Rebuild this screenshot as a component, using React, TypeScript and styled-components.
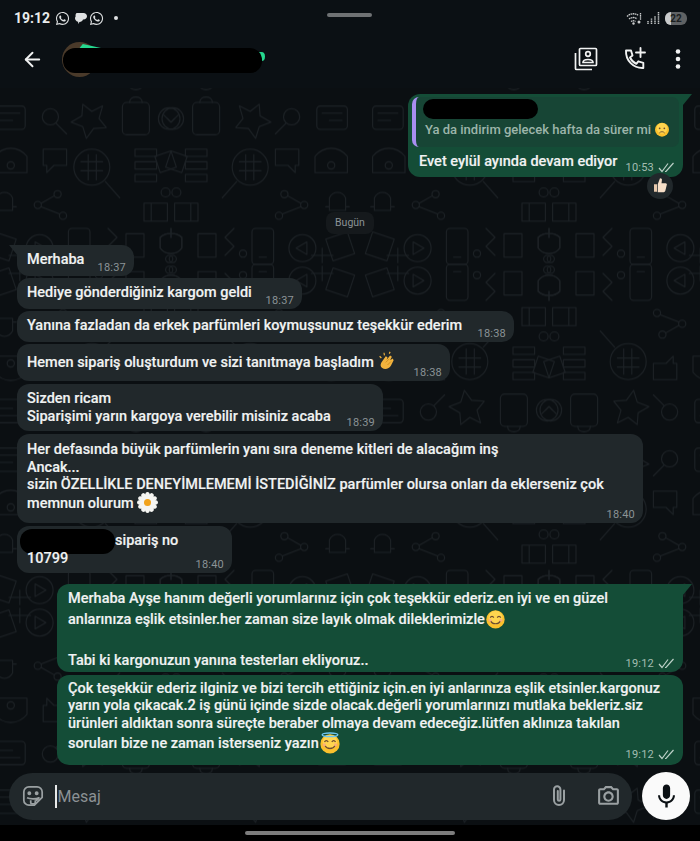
import React from "react";
import styled, { createGlobalStyle } from "styled-components";
import { ArrowLeft } from "lucide-react";
import { FaWhatsapp } from "react-icons/fa";
import { MdMic, MdOutlinePhotoCamera } from "react-icons/md";

const GlobalStyle = createGlobalStyle`
  html, body { margin: 0; padding: 0; background: #000; }
  body { font-family: Roboto, "Liberation Sans", sans-serif; }
`;

type EmojiKind = "sad" | "thumb" | "clap" | "daisy" | "smile" | "halo";

const Emoji: React.FC<{ kind: EmojiKind; size?: number }> = ({ kind, size = 20 }) => (
  <EmojiSvg width={size} height={size} viewBox="0 0 24 24">
    {(kind === "sad" || kind === "smile" || kind === "halo") && (
      <>
        <circle cx="12" cy="13" r="10.5" fill="#fbc02d" />
        <circle cx="12" cy="11" r="8" fill="#ffd54f" />
      </>
    )}
    {kind === "sad" && (
      <>
        <circle cx="8.5" cy="11" r="1.3" fill="#6d4c2f" />
        <circle cx="15.5" cy="11" r="1.3" fill="#6d4c2f" />
        <path d="M8 18c2-2.6 6-2.6 8 0" stroke="#6d4c2f" strokeWidth="1.3" fill="none" />
      </>
    )}
    {(kind === "smile" || kind === "halo") && (
      <>
        <path d="M6 11c1-2 3-2 4 0M14 11c1-2 3-2 4 0" stroke="#6d4c2f" strokeWidth="1.4" fill="none" />
        <path d="M6.5 15c2 4 9 4 11 0" stroke="#6d4c2f" strokeWidth="1.4" fill="none" />
        <circle cx="5.8" cy="14" r="1.8" fill="#f9a08b" opacity="0.7" />
        <circle cx="18.2" cy="14" r="1.8" fill="#f9a08b" opacity="0.7" />
      </>
    )}
    {kind === "halo" && <ellipse cx="12" cy="3" rx="8.5" ry="2" fill="none" stroke="#6ec6f0" strokeWidth="1.6" />}
    {kind === "thumb" && (
      <>
        <path d="M4 11h4v10H4z" fill="#e8c9ad" />
        <path d="M9 11l3-8c2 0 3 1 2.5 3L14 9.500h5.500c1.500 0 2 1.500 1.500 2.500l-2 8c-.3 1-1 1.500-2 1.500H9z" fill="#f7dfc8" />
      </>
    )}
    {kind === "clap" && (
      <>
        <path d="M5 13l5-7 2 1-1 3 4-5 2 1.500-2 4 3-2 1 2-3 6c-2 4-7 5-10 3-2-1.500-2.500-4-1-6.500z" fill="#f2b33d" />
        <path d="M3 6l2 2M8 2l.5 3M15 1l-1 2" stroke="#f2b33d" strokeWidth="1.3" fill="none" />
        <path d="M10 13l4-4M12 16l4-4" stroke="#c98a1e" strokeWidth="1" fill="none" />
      </>
    )}
    {kind === "daisy" && (
      <>
        {[0, 30, 60, 90, 120, 150, 180, 210, 240, 270, 300, 330].map((a) => (
          <ellipse key={a} cx="12" cy="4.500" rx="2.800" ry="4.500" fill="#f5f5f2" transform={`rotate(${a} 12 12)`} />
        ))}
        <circle cx="12" cy="12" r="4" fill="#f2a31c" />
      </>
    )}
  </EmojiSvg>
);

const DoubleCheck: React.FC = () => (
  <CheckSvg width="17" height="11" viewBox="0 0 17 11">
    <path d="M1 6l3 3.500L10 1.500M7 9.500L8 9.500 15.500 1" stroke="currentColor" strokeWidth="1.200" fill="none" />
  </CheckSvg>
);

const Wallpaper: React.FC = () => (
  <WallpaperSvg width="700" height="737">
    <defs>
      <g id="doodle-tile" fill="none" stroke="#1c2125" strokeWidth="1.200" strokeLinecap="round" strokeLinejoin="round">
        <rect x="14" y="14" width="34" height="26" rx="4" />
        <path d="M20 22h22M20 30h14" />
        <circle cx="76" cy="26" r="9" />
        <path d="M82 33l12 12" />
        <path d="M112 12l10 8 12-6-4 14 8 10-14 1-8 11-4-13-13-5 12-7z" />
        <rect x="156" y="10" width="30" height="36" rx="5" />
        <path d="M164 10c0-8 14-8 14 0" />
        <circle cx="212" cy="28" r="12" />
        <path d="M206 28l4 4 8-8" />
        <path d="M14 70c10-12 26-12 36 0v18H14z" />
        <circle cx="32" cy="80" r="4" />
        <path d="M68 62h26v18H80l-8 8v-8h-4z" />
        <circle cx="122" cy="82" r="20" />
        <path d="M110 76h24M110 86h24M118 68v28M127 68v28" />
        <path d="M137 98l16 18" />
        <path d="M170 62h24v8h-24zM170 76h24v8h-24zM170 90h24v8h-24z" />
        <path d="M210 64l18 6-6 18-18-6z" />
        <circle cx="216" cy="110" r="5" />
        <path d="M16 116c4-8 14-8 18 0v14H16zM12 126h4M34 126h4" />
        <circle cx="62" cy="124" r="4" />
        <circle cx="84" cy="112" r="4" />
        <circle cx="90" cy="136" r="4" />
        <path d="M66 122l14-8M66 126l20 8" />
        <path d="M180 122h26v20h-26zM188 122v20" />
        <path d="M14 154l24 8-8 24-24-8z" />
        <circle cx="64" cy="172" r="15" />
        <path d="M59 165l12 7-12 7z" />
        <rect x="96" y="150" width="24" height="40" rx="4" />
        <path d="M104 182h8" />
        <path d="M140 150l10 10-10 10 10 10M160 156h20v26h-20z" />
        <path d="M198 160c6-6 18-6 24 0v12c-6 8-18 8-24 0zM210 150v10" />
        <circle cx="208" cy="196" r="4" />
        <circle cx="130" cy="202" r="4" />
        <path d="M30 200h24M42 192v16" />
      </g>
      <pattern id="doodle" width="420" height="380" patternUnits="userSpaceOnUse" patternTransform="scale(0.9) translate(-20 6)">
        <use href="#doodle-tile" />
        <use href="#doodle-tile" transform="translate(420 0) scale(-1 1)" />
        <use href="#doodle-tile" transform="translate(0 380) scale(1 -1)" />
        <use href="#doodle-tile" transform="rotate(180 210 190)" />
      </pattern>
    </defs>
    <rect width="700" height="737" fill="url(#doodle)" />
  </WallpaperSvg>
);

export default function App() {
  return (
    <>
      <GlobalStyle />
      <Phone>
        <Header>
          <StatusBar>
            <Clock>19:12</Clock>
            <NotifIcons>
              <FaWhatsapp size={15} />
              <svg width="15" height="15" viewBox="0 0 15 15" fill="#dfe1e2">
                <path d="M5 2h6.500C13.500 2 15 3.300 15 5.200S13.500 8.500 11.500 8.500H11c-.4 1.500-1.800 2.500-3.500 2.500l-1.500 2 .2-2.200C4.500 10.500 3 9 3 7.200c0-.8.3-1.500.7-2C3.200 4 3.800 2 5 2z" />
              </svg>
              <FaWhatsapp size={15} />
              <NotifDot />
            </NotifIcons>
            <CameraPill />
            <StatusRight>
              <svg width="17" height="13" viewBox="0 0 17 13">
                <g fill="none" stroke="#c9cbcc" strokeWidth="1.300" strokeDasharray="1.600 0.500">
                  <path d="M1 4.500C4.500 1 9.500 1 12.500 3.500M3 7c2.500-2 6-2 8 0M5 9.500c1.500-1 3-1 4.500 0" />
                  <path d="M14.500 1v7" />
                </g>
                <circle cx="7.500" cy="11.500" r="1.200" fill="#c9cbcc" />
                <circle cx="13" cy="10" r="1.500" fill="#c9cbcc" />
              </svg>
              <svg width="13" height="12" viewBox="0 0 13 12">
                <g stroke="#bfc1c2" strokeWidth="1.500" strokeDasharray="1.500 0.600">
                  <path d="M1 12V9M4.500 12V6.500M8 12V4M11.500 12V0" />
                </g>
              </svg>
              <Battery>
                <BatteryLevel />
                <BatteryText>22</BatteryText>
              </Battery>
            </StatusRight>
          </StatusBar>
          <TitleRow>
            <BackButton>
              <ArrowLeft size={23} strokeWidth={2} color="#f1f2f2" />
            </BackButton>
            <Contact>
              <Avatar />
              <GreenName />
              <GreenEnd />
              <HeaderBlob />
            </Contact>
            <Actions>
              <HeaderIcon $mr={25}>
                <svg width="24" height="24" viewBox="0 0 24 24" fill="none" stroke="#f1f2f2" strokeWidth="1.700">
                  <rect x="5.500" y="1.500" width="17" height="17" rx="1" />
                  <path d="M1.500 6v15.500a1 1 0 0 0 1 1H18" />
                  <circle cx="14" cy="7" r="2.300" />
                  <path d="M9 15.500c0-2 2-3 5-3s5 1 5 3z" />
                </svg>
              </HeaderIcon>
              <HeaderIcon $mr={19}>
                <svg width="24" height="24" viewBox="0 0 24 24" fill="none" stroke="#f1f2f2" strokeWidth="1.900" strokeLinejoin="round">
                  <path d="M3 3.500h5l1.500 5-2.500 2c1.200 2.700 3.500 5 6.300 6.300l2-2.500 5 1.500v5.200c-10 .5-17.800-7.500-17.300-17.500z" />
                  <path d="M17.500 1v9M13 5.500h9" strokeLinecap="round" />
                </svg>
              </HeaderIcon>
              <HeaderIcon $mr={10}>
                <svg width="24" height="24" viewBox="0 0 24 24" fill="#f1f2f2">
                  <circle cx="12" cy="4.500" r="2.300" />
                  <circle cx="12" cy="12" r="2.300" />
                  <circle cx="12" cy="19.500" r="2.300" />
                </svg>
              </HeaderIcon>
            </Actions>
          </TitleRow>
        </Header>

        <Chat>
          <Wallpaper />
          <Messages>
            <Bubble $out $w={275} $tail $mt={6} $h={83} $block>
              <Quote>
                <QuoteBlob />
                <QuoteText>
                  Ya da indirim gelecek hafta da sürer mi <Emoji kind="sad" size={16} />
                </QuoteText>
              </Quote>
              <Row $mt={6}>
                <Text $pl={1}>Evet eylül ayında devam ediyor</Text>
                <Meta $out>
                  10:53 <DoubleCheck />
                </Meta>
              </Row>
            </Bubble>
            <Reaction>
              <Emoji kind="thumb" size={18} />
            </Reaction>
            <DayRow>
              <DayPill>Bugün</DayPill>
            </DayRow>

            <Bubble $w={117} $tail $mt={11}>
              <Row>
                <Text>Merhaba</Text>
                <Meta>18:37</Meta>
              </Row>
            </Bubble>
            <Bubble $w={285} $mt={2}>
              <Row>
                <Text>Hediye gönderdiğiniz kargom geldi</Text>
                <Meta>18:37</Meta>
              </Row>
            </Bubble>
            <Bubble $w={497} $mt={2}>
              <Row>
                <Text>Yanına fazladan da erkek parfümleri koymuşsunuz teşekkür ederim</Text>
                <Meta>18:38</Meta>
              </Row>
            </Bubble>
            <Bubble $w={433} $mt={2} $h={37}>
              <Row>
                <Text $lh={26}>
                  Hemen sipariş oluşturdum ve sizi tanıtmaya başladım <Emoji kind="clap" size={21} />
                </Text>
                <Meta>18:38</Meta>
              </Row>
            </Bubble>
            <Bubble $w={366} $mt={3} $h={47}>
              <Row>
                <Text>
                  Sizden ricam
                  <br />
                  Siparişimi yarın kargoya verebilir misiniz acaba
                </Text>
                <Meta>18:39</Meta>
              </Row>
            </Bubble>
            <Bubble $w={626} $mt={3} $h={89} $pt={7} $block>
              <Text>
                Her defasında büyük parfümlerin yanı sıra deneme kitleri de alacağım inş
                <br />
                Ancak...
                <br />
                sizin ÖZELLİKLE DENEYİMLEMEMİ İSTEDİĞİNİZ parfümler olursa onları da eklerseniz çok
                <EmojiLine $lh={19}>
                  memnun olurum <Emoji kind="daisy" size={21} />
                </EmojiLine>
              </Text>
              <FootMeta $mt={-5}>
                <Meta>18:40</Meta>
              </FootMeta>
            </Bubble>
            <Bubble $w={215} $mt={3} $h={47}>
              <Row>
                <Text>
                  <InlineBlob />
                  sipariş no
                  <br />
                  10799
                </Text>
                <Meta>18:40</Meta>
              </Row>
            </Bubble>

            <Bubble $out $w={626} $tail $mt={11} $h={88} $pt={5} $block>
              <Text $lh={20.500} $pl={1}>
                Merhaba Ayşe hanım değerli yorumlarınız için çok teşekkür ederiz.en iyi ve en güzel
                <br />
                anlarınıza eşlik etsinler.her zaman size layık olmak dileklerimizle
                <Emoji kind="smile" size={21} />
                <br />
                <br />
                Tabi ki kargonuzun yanına testerları ekliyoruz..
              </Text>
              <FootMeta $mt={-14}>
                <Meta $out>
                  19:12 <DoubleCheck />
                </Meta>
              </FootMeta>
            </Bubble>
            <Bubble $out $w={626} $mt={3} $h={90} $pt={4.500} $block>
              <Text $pl={1}>
                Çok teşekkür ederiz ilginiz ve bizi tercih ettiğiniz için.en iyi anlarınıza eşlik etsinler.kargonuz
                <br />
                yarın yola çıkacak.2 iş günü içinde sizde olacak.değerli yorumlarınızı mutlaka bekleriz.siz
                <br />
                ürünleri aldıktan sonra süreçte beraber olmaya devam edeceğiz.lütfen aklınıza takılan
                <EmojiLine $lh={24}>
                  soruları bize ne zaman isterseniz yazın
                  <Emoji kind="halo" size={22} />
                </EmojiLine>
              </Text>
              <FootMeta $mt={-8}>
                <Meta $out>
                  19:12 <DoubleCheck />
                </Meta>
              </FootMeta>
            </Bubble>
          </Messages>

          <Composer>
            <InputBar>
              <svg width="22" height="22" viewBox="0 0 24 24" fill="none" stroke="#9aa0a2" strokeWidth="1.900" strokeLinejoin="round">
                <path d="M7.500 2h9A5.500 5.500 0 0 1 22 7.500v6L13.500 22h-6A5.500 5.500 0 0 1 2 16.500v-9A5.500 5.500 0 0 1 7.500 2z" />
                <circle cx="8" cy="9" r="1.200" fill="#9aa0a2" />
                <circle cx="16" cy="9" r="1.200" fill="#9aa0a2" />
                <path d="M5.500 14c3 1.500 10 1.500 13 0-.6 1.500-2 2.500-3.500 3M9.500 16.500v2.500c0 2 5 2 5 0v-2.500" />
              </svg>
              <Caret />
              <Placeholder>Mesaj</Placeholder>
              <InputActions>
                <svg width="18" height="24" viewBox="0 0 18 24" fill="none" stroke="#9aa0a2" strokeWidth="2" strokeLinecap="round">
                  <path d="M14 6.500V16a5 5 0 0 1-10 0V5.500a3.200 3.200 0 0 1 6.400 0V15.500a1.300 1.300 0 0 1-2.600 0V7" />
                </svg>
                <MdOutlinePhotoCamera size={25} color="#9aa0a2" />
              </InputActions>
            </InputBar>
            <MicButton>
              <MdMic size={29} color="#0b1014" />
            </MicButton>
          </Composer>
        </Chat>

        <NavBar>
          <HomeBar />
        </NavBar>
      </Phone>
    </>
  );
}

const Phone = styled.div`
  width: 700px;
  height: 841px;
  display: flex;
  flex-direction: column;
  background: #000;
  overflow: hidden;
`;

const Header = styled.header`
  height: 88px;
  background: #0b1014;
  display: flex;
  flex-direction: column;
  flex-shrink: 0;
`;

const StatusBar = styled.div`
  height: 36px;
  display: grid;
  grid-template-columns: auto auto 1fr auto;
  align-items: center;
  padding: 0 13px 0 14px;
  position: relative;
  color: #e4e6e7;
`;

const Clock = styled.span`
  font-size: 14px;
  font-weight: 700;
  color: #e9ebec;
`;

const NotifIcons = styled.div`
  display: flex;
  align-items: center;
  gap: 2px;
  margin-left: 5px;
  color: #dfe1e2;
`;

const NotifDot = styled.span`
  width: 4px;
  height: 4px;
  border-radius: 50%;
  background: #dfe1e2;
  margin-left: 8px;
`;

const CameraPill = styled.span`
  position: absolute;
  left: 327px;
  top: 13px;
  width: 45px;
  height: 4px;
  border-radius: 2px;
  background: #6f7274;
`;

const StatusRight = styled.div`
  grid-column: 4;
  display: flex;
  align-items: center;
  gap: 4px;
`;

const Battery = styled.div`
  position: relative;
  width: 22px;
  height: 13px;
  border-radius: 6px;
  background: #5f6264;
  overflow: hidden;
  margin-left: 1px;
`;

const BatteryLevel = styled.span`
  position: absolute;
  left: 0;
  top: 0;
  bottom: 0;
  width: 6px;
  background: #c9cbcc;
`;

const BatteryText = styled.span`
  position: absolute;
  inset: 0;
  text-align: center;
  font-size: 10px;
  line-height: 13px;
  font-weight: 700;
  color: #1b1e20;
`;

const TitleRow = styled.div`
  flex: 1;
  display: flex;
  align-items: flex-start;
  padding-top: 11px;
`;

const BackButton = styled.div`
  width: 62px;
  height: 24px;
  display: flex;
  align-items: center;
  padding-left: 21px;
  box-sizing: border-box;
`;

const Contact = styled.div`
  position: relative;
  width: 204px;
  height: 40px;
`;

const Avatar = styled.span`
  position: absolute;
  left: 0;
  top: -5px;
  width: 35px;
  height: 35px;
  border-radius: 50%;
  background: #4a3a2a;
`;

const GreenName = styled.span`
  position: absolute;
  left: 16px;
  top: -3px;
  width: 32px;
  height: 6px;
  background: #25d88f;
  clip-path: polygon(0 100%, 15% 0, 100% 100%);
`;

const GreenEnd = styled.span`
  position: absolute;
  left: 196px;
  top: 5px;
  width: 7px;
  height: 9px;
  background: #25d88f;
  border-radius: 0 60% 60% 0;
`;

const HeaderBlob = styled.span`
  position: absolute;
  left: 1px;
  top: 1px;
  width: 199px;
  height: 25px;
  background: #000;
  border-radius: 12px;
`;

const Actions = styled.div`
  margin-left: auto;
  display: flex;
  align-items: center;
  height: 24px;
`;

const HeaderIcon = styled.div<{ $mr: number }>`
  display: flex;
  margin-right: ${(p) => p.$mr}px;
`;

const Chat = styled.main`
  position: relative;
  height: 737px;
  flex-shrink: 0;
  background: #0b0f12;
  display: flex;
  flex-direction: column;
  overflow: hidden;
`;

const WallpaperSvg = styled.svg`
  position: absolute;
  left: 0;
  top: 0;
`;

const Messages = styled.div`
  position: relative;
  flex: 1;
  display: flex;
  flex-direction: column;
  padding: 0 17px;
`;

const Bubble = styled.div<{
  $out?: boolean;
  $w: number;
  $mt: number;
  $h?: number;
  $pt?: number;
  $tail?: boolean;
  $block?: boolean;
}>`
  position: relative;
  box-sizing: border-box;
  width: ${(p) => p.$w}px;
  min-height: ${(p) => p.$h ?? 31}px;
  margin-top: ${(p) => p.$mt}px;
  align-self: ${(p) => (p.$out ? "flex-end" : "flex-start")};
  background: ${(p) => (p.$out ? "#144d37" : "#21282b")};
  border-radius: 12px;
  ${(p) => (p.$tail ? (p.$out ? "border-top-right-radius: 0;" : "border-top-left-radius: 0;") : "")}
  padding: ${(p) => p.$pt ?? 6}px 8px 2px 10px;
  color: #f0f2f2;
  ${(p) => (p.$block ? "display: block;" : "display: flex;")}

  ${(p) =>
    p.$tail
      ? `&::before {
    content: "";
    position: absolute;
    top: 0;
    ${p.$out ? "right: -9px;" : "left: -8px;"}
    width: 9px;
    height: 11px;
    background: ${p.$out ? "#144d37" : "#21282b"};
    clip-path: polygon(${p.$out ? "0 0, 100% 0, 0 100%" : "0 0, 100% 0, 100% 100%"});
  }`
      : ""}
`;

const Row = styled.div<{ $mt?: number }>`
  flex: 1;
  display: flex;
  justify-content: space-between;
  align-items: flex-end;
  min-height: 21px;
  margin-top: ${(p) => p.$mt ?? 0}px;
`;

const Text = styled.div<{ $lh?: number; $pl?: number }>`
  align-self: flex-start;
  font-size: 14.500px;
  font-weight: 500;
  line-height: ${(p) => p.$lh ?? 17.500}px;
  padding-left: ${(p) => p.$pl ?? 0}px;
  white-space: nowrap;
  -webkit-text-stroke: 0.15px currentColor;
`;

const EmojiLine = styled.span<{ $lh: number }>`
  display: block;
  height: ${(p) => p.$lh}px;
  line-height: ${(p) => p.$lh}px;
`;

const Meta = styled.span<{ $out?: boolean }>`
  display: inline-flex;
  align-items: center;
  gap: 4px;
  font-size: 11px;
  line-height: 13px;
  font-weight: 400;
  letter-spacing: 0.2px;
  color: ${(p) => (p.$out ? "#a3bdb1" : "#8b9396")};
  white-space: nowrap;
`;

const FootMeta = styled.div<{ $mt?: number }>`
  display: flex;
  justify-content: flex-end;
  margin-top: ${(p) => p.$mt ?? -4}px;
`;

const EmojiSvg = styled.svg`
  vertical-align: middle;
  margin-top: -3px;
`;

const CheckSvg = styled.svg`
  display: block;
  color: #bcd0c7;
`;

const Quote = styled.div`
  position: relative;
  margin: -3px -4px 0 -6px;
  height: 50px;
  padding: 24px 0 0 13px;
  box-sizing: border-box;
  background: #174535;
  border-radius: 7px;
  border-left: 4px solid #a98ef0;
`;

const QuoteBlob = styled.span`
  position: absolute;
  left: 7px;
  top: 2px;
  width: 115px;
  height: 20px;
  border-radius: 10px;
  background: #000;
`;

const QuoteText = styled.div`
  font-size: 13px;
  line-height: 18px;
  font-weight: 500;
  color: #9db5aa;
  margin-left: -4px;
  white-space: nowrap;
`;

const Reaction = styled.div`
  width: 26px;
  height: 26px;
  margin: -4px 10px 0 0;
  align-self: flex-end;
  position: relative;
  border-radius: 50%;
  background: #21282b;
  display: flex;
  align-items: center;
  justify-content: center;
`;

const DayRow = styled.div`
  display: flex;
  justify-content: center;
  margin: 13px 0 0 0;
`;

const DayPill = styled.span`
  height: 22px;
  padding: 0 9px;
  border-radius: 8px;
  background: #15191c;
  font-size: 10.500px;
  line-height: 22px;
  color: #8b9396;
`;

const InlineBlob = styled.span`
  display: inline-block;
  width: 95px;
  height: 25px;
  margin: -6px 0 -6px -7px;
  vertical-align: middle;
  border-radius: 12px;
  background: #000;
`;

const Composer = styled.div`
  position: relative;
  display: flex;
  align-items: center;
  gap: 10px;
  padding: 0 10px 5px 9px;
`;

const InputBar = styled.div`
  width: 623px;
  height: 47px;
  border-radius: 24px;
  background: #21282b;
  display: flex;
  align-items: center;
  padding: 0 11px 0 13px;
  box-sizing: border-box;
`;

const Caret = styled.span`
  width: 1.500px;
  height: 23px;
  margin-left: 11px;
  background: #e8eaea;
`;

const Placeholder = styled.span`
  margin-left: 1px;
  font-size: 16px;
  padding-top: 1px;
  color: #8b9194;
`;

const InputActions = styled.div`
  margin-left: auto;
  display: flex;
  align-items: center;
  gap: 28px;
`;

const MicButton = styled.div`
  width: 48px;
  height: 48px;
  border-radius: 50%;
  background: #fafafa;
  display: flex;
  align-items: center;
  justify-content: center;
`;

const NavBar = styled.div`
  flex: 1;
  display: flex;
  justify-content: center;
  padding-top: 6px;
`;

const HomeBar = styled.span`
  width: 210px;
  height: 4px;
  border-radius: 2px;
  background: #7d7d7d;
`;
